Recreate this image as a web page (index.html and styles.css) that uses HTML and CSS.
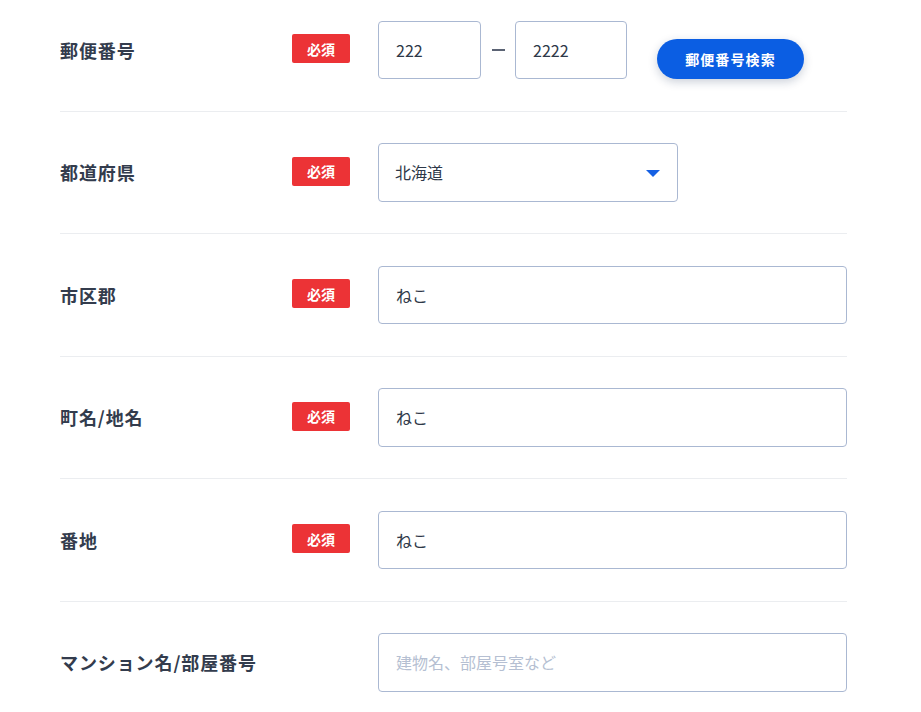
FILE: index.html
```html
<!DOCTYPE html>
<html lang="ja">
<head>
<meta charset="utf-8">
<title>住所入力</title>
<link rel="stylesheet" href="styles.css">
</head>
<body>
<form class="address-form">
  <div class="row row-first">
    <div class="label">郵便番号</div>
    <div class="badge-cell"><span class="badge">必須</span></div>
    <div class="field postal">
      <input class="input input-zip3" type="text" value="222">
      <span class="dash"></span>
      <input class="input input-zip4" type="text" value="2222">
      <button type="button" class="search-btn">郵便番号検索</button>
    </div>
  </div>
  <div class="row">
    <div class="label">都道府県</div>
    <div class="badge-cell"><span class="badge">必須</span></div>
    <div class="field">
      <div class="select-wrap">
        <select class="input select">
          <option>北海道</option>
        </select>
        <svg class="caret" width="14" height="7" viewBox="0 0 14 7"><path d="M0 0H14L7 7Z" fill="#1560e3"/></svg>
      </div>
    </div>
  </div>
  <div class="row">
    <div class="label">市区郡</div>
    <div class="badge-cell"><span class="badge">必須</span></div>
    <div class="field"><input class="input input-full" type="text" value="ねこ"></div>
  </div>
  <div class="row">
    <div class="label">町名/地名</div>
    <div class="badge-cell"><span class="badge">必須</span></div>
    <div class="field"><input class="input input-full" type="text" value="ねこ"></div>
  </div>
  <div class="row">
    <div class="label">番地</div>
    <div class="badge-cell"><span class="badge">必須</span></div>
    <div class="field"><input class="input input-full" type="text" value="ねこ"></div>
  </div>
  <div class="row row-last">
    <div class="label">マンション名/部屋番号</div>
    <div class="badge-cell"></div>
    <div class="field"><input class="input input-full" type="text" placeholder="建物名、部屋号室など"></div>
  </div>
</form>
</body>
</html>
```
FILE: styles.css
```css
html, body {
  margin: 0;
  padding: 0;
  background: #ffffff;
}

body {
  font-family: "Noto Sans CJK JP", "Noto Sans", sans-serif;
  color: #333b49;
}

.address-form {
  width: 787px;
  margin-left: 60px;
}

.row {
  display: grid;
  grid-template-columns: 232px 86px 1fr;
  align-items: center;
  padding: 31.5px 0;
  border-bottom: 1px solid #ebedf0;
}

.row-first {
  padding-top: 20.5px;
}

.row-last {
  border-bottom: none;
}

.label {
  font-size: 18px;
  font-weight: 700;
  line-height: 1;
  letter-spacing: 0.05em;
  color: #333c4d;
}

.badge-cell {
  display: flex;
  align-items: center;
}

.badge {
  display: inline-flex;
  align-items: center;
  justify-content: center;
  width: 58px;
  height: 29px;
  border-radius: 2px;
  background: #ec3336;
  color: #ffffff;
  font-size: 14px;
  font-weight: 700;
  line-height: 1;
  margin-top: -2px;
}

.field {
  display: flex;
}

.input {
  box-sizing: border-box;
  height: 58.5px;
  padding: 0 17px;
  border: 1px solid #aab8d2;
  border-radius: 4px;
  background: #ffffff;
  font-family: "Noto Sans CJK JP", "Noto Sans", sans-serif;
  font-size: 16px;
  color: #2e3848;
  outline: none;
}

.input::placeholder {
  color: #b5bfd2;
}

.input-full {
  width: 100%;
}

.postal {
  align-items: flex-end;
}

.input-zip3 {
  width: 103px;
}

.input-zip4 {
  width: 112px;
}

.dash {
  width: 13px;
  height: 2px;
  background: #5b6374;
  margin: 0 10px 28px 11px;
  align-self: flex-end;
}

.search-btn {
  width: 147px;
  height: 40px;
  margin-left: 30px;
  border: none;
  border-radius: 20px;
  background: #0b5ee3;
  color: #ffffff;
  font-family: "Noto Sans CJK JP", "Noto Sans", sans-serif;
  font-size: 14px;
  font-weight: 700;
  letter-spacing: 0.08em;
  box-shadow: 0 3px 10px rgba(20, 40, 80, 0.22);
  cursor: pointer;
}

.select-wrap {
  position: relative;
  width: 300px;
}

.select {
  width: 100%;
  -webkit-appearance: none;
  appearance: none;
  padding-left: 16px;
}

.caret {
  position: absolute;
  right: 18px;
  top: 27px;
  pointer-events: none;
}
```
